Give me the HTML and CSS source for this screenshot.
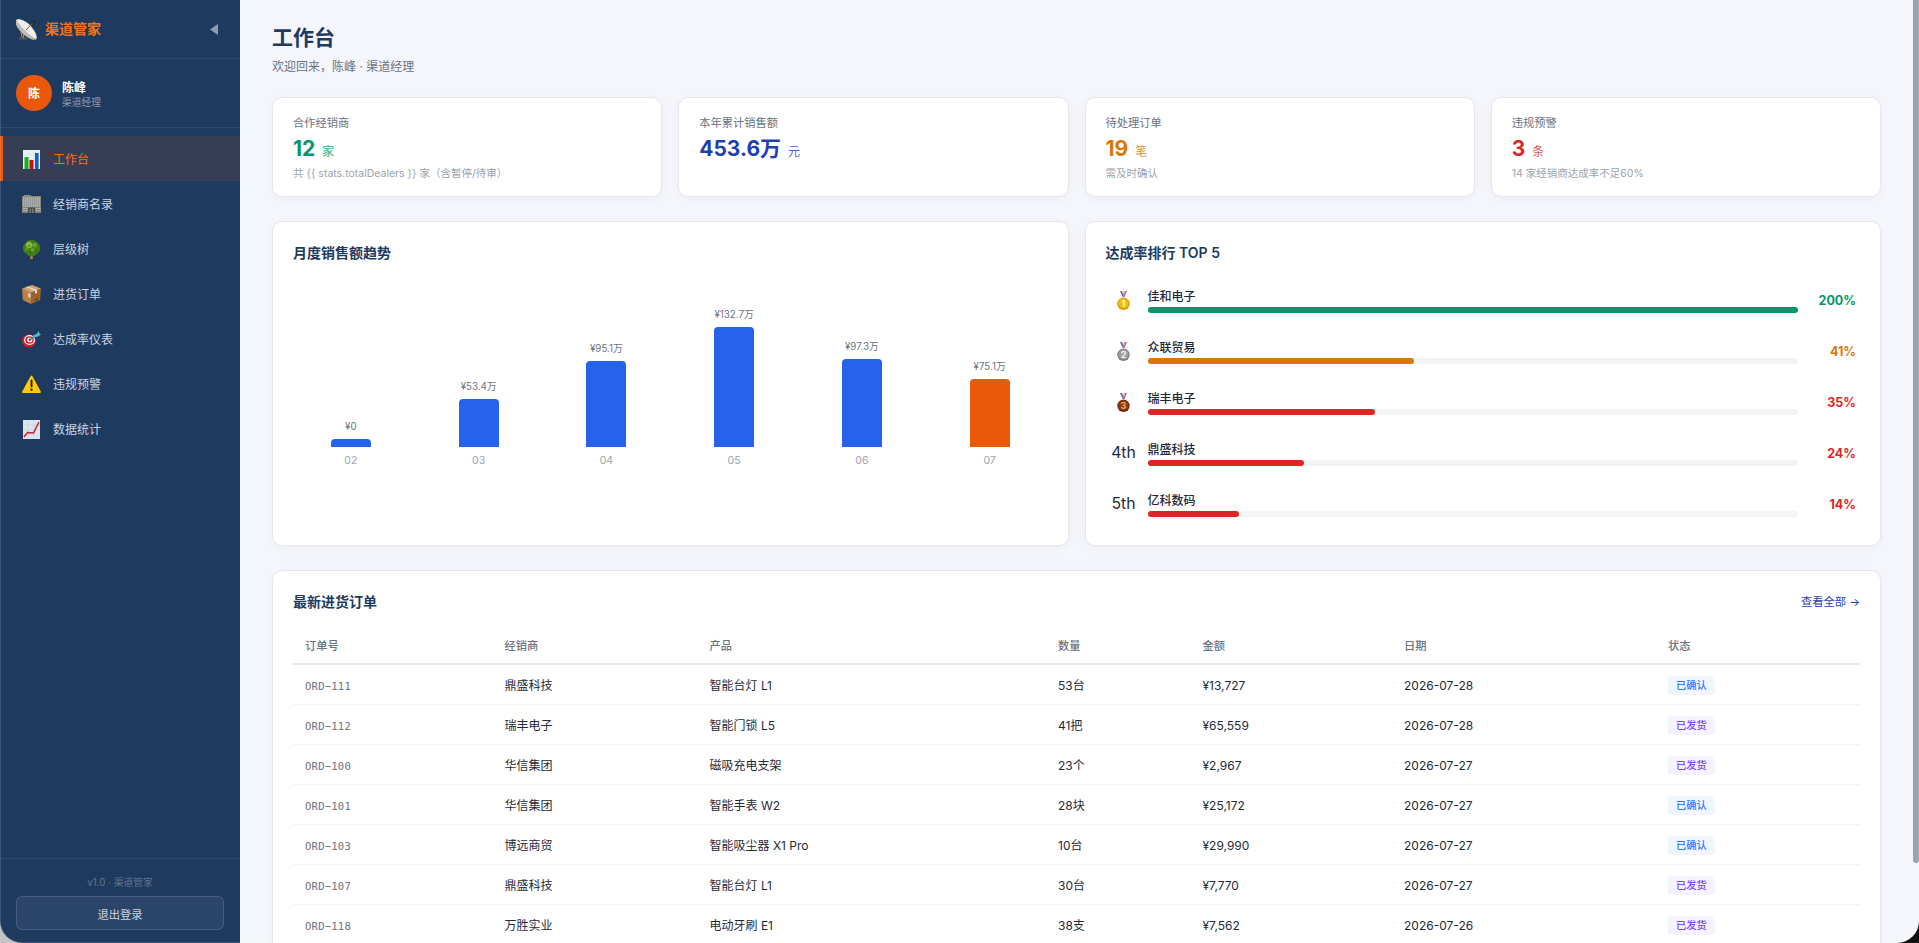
FILE: index.html
```html
<!DOCTYPE html>
<html lang="zh-CN">
<head>
    <meta charset="UTF-8">
    <meta name="viewport" content="width=device-width, initial-scale=1.0">
    <title>渠道管家</title>
    <link rel="stylesheet" href="styles.css">
</head>
<body>
    <div class="app">
        <aside class="sidebar">
            <div class="sidebar__header">
                <svg class="logo" viewBox="0 0 21 21">
                    <path d="M3 12l6-1 4 6-3 3H4z" fill="#30353b"/>
                    <ellipse cx="7" cy="19.300" rx="5" ry="1.600" fill="#4b5057"/>
                    <path d="M5 13l1 5M8 15l-1 4" stroke="#a9aaa8" stroke-width=".9"/>
                    <path d="M10 10l7-7M16 13l2-9" stroke="#2f3337" stroke-width="1.300"/>
                    <path d="M13.500 4l4-3 2.500 1-1 3-3 1.500z" fill="#2b2f33"/>
                    <path d="M0 .8C2-1 10 1 15 7s7.500 12 5 13.500S9 18 4 12-1 2.500 0 .8z" fill="#bcbdba"/>
                    <path d="M1 .8c3-1 9 1.200 13.500 6.700S21 18 19.500 19C15 18 3 7 1 .8z" fill="#efefed"/>
                    <path d="M10 11l6.500-7" stroke="#66696b" stroke-width="1"/>
                </svg>
                <span class="sidebar__title">渠道管家</span>
                <svg class="sidebar__toggle" viewBox="0 0 8 11"><path d="M8 0v11L0 5.500z"/></svg>
            </div>
            <div class="user">
                <div class="user__avatar">陈</div>
                <div class="user__info">
                    <div class="user__name">陈峰</div>
                    <div class="user__role">渠道经理</div>
                </div>
            </div>
            <nav class="nav">
                <a class="nav__item nav__item--active">
                    <svg class="nav__icon" viewBox="0 0 19 19">
                        <path d="M1 0h17v19H1z" fill="#e9f0f7"/>
                        <path d="M1 5h17M1 10h17M1 15h17M7 0v19M12 0v19" stroke="#c8d5e2" stroke-width=".5"/>
                        <path d="M2.500 7h4v12h-4z" fill="#12b512"/>
                        <path d="M7.500 10h4v9h-4z" fill="#c0141c"/>
                        <path d="M13 3h3.600v16H13z" fill="#1260c4"/>
                    </svg>
                    工作台
                </a>
                <a class="nav__item">
                    <svg class="nav__icon" viewBox="0 0 19 19">
                        <path d="M2 0h7v2H2z" fill="#8b8f8c"/>
                        <path d="M0 1h19v17H0z" fill="#86867c"/>
                        <path d="M1 3h17M1 5h17M1 7h17M1 9h17M1 11h17" stroke="#a9bdc0" stroke-width="1.300" stroke-dasharray="1.500 .5"/>
                        <path d="M1 13.500h5M1 15.500h5M13.500 13.500h5M13.500 15.500h5" stroke="#b5b0a4" stroke-width="1.200"/>
                        <path d="M6 12.500h7V18H6z" fill="#494741"/>
                        <path d="M8.200 13.500V18M10.800 13.500V18" stroke="#a7b1b0" stroke-width=".8"/>
                    </svg>
                    经销商名录
                </a>
                <a class="nav__item">
                    <svg class="nav__icon" viewBox="0 0 19 19">
                        <path d="M8.600 13h1.800l.4 6H8.200z" fill="#b38a35"/>
                        <path d="M9.500 0c3 0 5 1 6 3 2 1 3 3 2.500 5 .5 3-1 5-3.500 6-2 3-8 3-10 0C2 13 .5 11 1 8 .5 6 2 4 3.500 3c1-2 3-3 6-3z" fill="#3f7d17"/>
                        <circle cx="7" cy="5" r="3.200" fill="#86b93a"/>
                        <circle cx="12.500" cy="5.500" r="2.400" fill="#6fa52b"/>
                        <circle cx="5" cy="9.500" r="2" fill="#5f9823"/>
                        <circle cx="10.500" cy="10" r="2" fill="#689f2a"/>
                        <path d="M6 7l2-2M11 8l2-2M4 12l2-2M13 12l2-2M8 13l1-2" stroke="#28580c" stroke-width=".8"/>
                    </svg>
                    层级树
                </a>
                <a class="nav__item">
                    <svg class="nav__icon" viewBox="0 0 19 19">
                        <path d="M0 3.500L9 7v12L.8 15z" fill="#b98049"/>
                        <path d="M19 3.500L9 7v12l9.200-4z" fill="#99622f"/>
                        <path d="M0 3.500L10 0l9 3.500L9 7.500z" fill="#d3a375"/>
                        <path d="M4 2.100L6 1.400 15 5v3l-2 .8V6z" fill="#ead9c3"/>
                        <path d="M6 8l2.500 1v4L6 12z" fill="#e5cfb4"/>
                        <path d="M13 14l3-1.300v2L13 16z" fill="#6d421c"/>
                    </svg>
                    进货订单
                </a>
                <a class="nav__item">
                    <svg class="nav__icon" viewBox="0 0 19 19">
                        <ellipse cx="7" cy="11" rx="7" ry="6.500" fill="#cf1e29"/>
                        <ellipse cx="7.500" cy="10" rx="5.500" ry="5" fill="#f3efef"/>
                        <ellipse cx="7.500" cy="10" rx="4.200" ry="3.700" fill="#cf1e29"/>
                        <ellipse cx="7.700" cy="9.900" rx="2.700" ry="2.400" fill="#f3efef"/>
                        <circle cx="7.900" cy="9.800" r="1.200" fill="#cf1e29"/>
                        <path d="M8 9.800L15 4" stroke="#2b8e9c" stroke-width="1.500"/>
                        <path d="M11 5.500L15 4l1.500-3 1 2.500L19 4.500l-3 2-4 1z" fill="#52bfca"/>
                    </svg>
                    达成率仪表
                </a>
                <a class="nav__item">
                    <svg class="nav__icon" viewBox="0 0 19 19">
                        <path d="M9.500 1.500L18 17H1z" fill="#ffca0c" stroke="#ffca0c" stroke-width="1.800" stroke-linejoin="round"/>
                        <path d="M9.500 5.500v6" stroke="#322a12" stroke-width="2" stroke-linecap="round"/>
                        <circle cx="9.500" cy="14.800" r="1.200" fill="#322a12"/>
                    </svg>
                    违规预警
                </a>
                <a class="nav__item">
                    <svg class="nav__icon" viewBox="0 0 19 19">
                        <path d="M1 0h17v19H1z" fill="#dde6ee"/>
                        <path d="M1 5h17M1 10h17M1 15h17M6 0v19M12 0v19" stroke="#bccad6" stroke-width=".5"/>
                        <path d="M2 17l3.500-4.500 6 .5L17 2" fill="none" stroke="#c8202d" stroke-width="1.500"/>
                    </svg>
                    数据统计
                </a>
            </nav>
            <div class="sidebar__footer">
                <div class="version">v1.0 · 渠道管家</div>
                <button class="logout">退出登录</button>
            </div>
        </aside>

        <main class="main">
            <h1 class="page-title">工作台</h1>
            <p class="page-subtitle">欢迎回来，陈峰 · 渠道经理</p>

            <section class="stats">
                <div class="card stat stat--green">
                    <div class="stat__label">合作经销商</div>
                    <div class="stat__value">12 <span class="stat__unit">家</span></div>
                    <div class="stat__sub">共 {{ stats.totalDealers }} 家（含暂停/待审）</div>
                </div>
                <div class="card stat stat--blue">
                    <div class="stat__label">本年累计销售额</div>
                    <div class="stat__value">453.6万 <span class="stat__unit">元</span></div>
                </div>
                <div class="card stat stat--amber">
                    <div class="stat__label">待处理订单</div>
                    <div class="stat__value">19 <span class="stat__unit">笔</span></div>
                    <div class="stat__sub">需及时确认</div>
                </div>
                <div class="card stat stat--red">
                    <div class="stat__label">违规预警</div>
                    <div class="stat__value">3 <span class="stat__unit">条</span></div>
                    <div class="stat__sub">14 家经销商达成率不足60%</div>
                </div>
            </section>

            <section class="panels">
                <div class="card panel">
                    <h2 class="panel__title">月度销售额趋势</h2>
                    <div class="chart">
                        <div class="chart__col"><span class="chart__value">¥0</span><div class="chart__bar" style="height: 8px"></div><span class="chart__label">02</span></div>
                        <div class="chart__col"><span class="chart__value">¥53.4万</span><div class="chart__bar" style="height: 48px"></div><span class="chart__label">03</span></div>
                        <div class="chart__col"><span class="chart__value">¥95.1万</span><div class="chart__bar" style="height: 86px"></div><span class="chart__label">04</span></div>
                        <div class="chart__col"><span class="chart__value">¥132.7万</span><div class="chart__bar" style="height: 120px"></div><span class="chart__label">05</span></div>
                        <div class="chart__col"><span class="chart__value">¥97.3万</span><div class="chart__bar" style="height: 88px"></div><span class="chart__label">06</span></div>
                        <div class="chart__col"><span class="chart__value">¥75.1万</span><div class="chart__bar chart__bar--current" style="height: 68px"></div><span class="chart__label">07</span></div>
                    </div>
                </div>
                <div class="card panel">
                    <h2 class="panel__title">达成率排行 TOP 5</h2>
                    <div class="ranks">
                        <div class="rank rank--green">
                            <div class="rank__no">
                                <svg class="medal" viewBox="0 0 13 19">
                                    <path d="M3 0h3l1 6H5.800z" fill="#4a68c8"/><path d="M10 0H7L6 6h1.500z" fill="#e0565c"/><path d="M4.800 0h1l.9 4.500zM7.500 0h.9l-1.200 4.500z" fill="#eee"/>
                                    <circle cx="6.500" cy="12.800" r="6.200" fill="#dc9a05"/><circle cx="6.500" cy="12.500" r="4.900" fill="#f3bd12"/>
                                    <text x="6.500" y="15.900" fill="#fff8cc">1</text>
                                </svg>
                            </div>
                            <div class="rank__body"><div class="rank__name">佳和电子</div><div class="rank__track"><div class="rank__fill" style="width: 100%"></div></div></div>
                            <div class="rank__pct">200%</div>
                        </div>
                        <div class="rank rank--amber">
                            <div class="rank__no">
                                <svg class="medal" viewBox="0 0 13 19">
                                    <path d="M3 0h3l1 6H5.800z" fill="#4a68c8"/><path d="M10 0H7L6 6h1.500z" fill="#e0565c"/><path d="M4.800 0h1l.9 4.500zM7.500 0h.9l-1.200 4.500z" fill="#eee"/>
                                    <circle cx="6.500" cy="12.800" r="6.200" fill="#7d7d7d"/><circle cx="6.500" cy="12.500" r="4.900" fill="#a0a0a0"/>
                                    <text x="6.500" y="15.900" fill="#f1f1f1">2</text>
                                </svg>
                            </div>
                            <div class="rank__body"><div class="rank__name">众联贸易</div><div class="rank__track"><div class="rank__fill" style="width: 41%"></div></div></div>
                            <div class="rank__pct">41%</div>
                        </div>
                        <div class="rank rank--red">
                            <div class="rank__no">
                                <svg class="medal" viewBox="0 0 13 19">
                                    <path d="M3 0h3l1 6H5.800z" fill="#4a68c8"/><path d="M10 0H7L6 6h1.500z" fill="#e0565c"/><path d="M4.800 0h1l.9 4.500zM7.500 0h.9l-1.200 4.500z" fill="#eee"/>
                                    <circle cx="6.500" cy="12.800" r="6.200" fill="#71290a"/><circle cx="6.500" cy="12.500" r="4.900" fill="#8f3a10"/>
                                    <text x="6.500" y="15.900" fill="#f0a35c">3</text>
                                </svg>
                            </div>
                            <div class="rank__body"><div class="rank__name">瑞丰电子</div><div class="rank__track"><div class="rank__fill" style="width: 35%"></div></div></div>
                            <div class="rank__pct">35%</div>
                        </div>
                        <div class="rank rank--red">
                            <div class="rank__no">4th</div>
                            <div class="rank__body"><div class="rank__name">鼎盛科技</div><div class="rank__track"><div class="rank__fill" style="width: 24%"></div></div></div>
                            <div class="rank__pct">24%</div>
                        </div>
                        <div class="rank rank--red">
                            <div class="rank__no">5th</div>
                            <div class="rank__body"><div class="rank__name">亿科数码</div><div class="rank__track"><div class="rank__fill" style="width: 14%"></div></div></div>
                            <div class="rank__pct">14%</div>
                        </div>
                    </div>
                </div>
            </section>

            <section class="card panel">
                <div class="panel__head">
                    <h2 class="panel__title">最新进货订单</h2>
                    <a class="panel__link">查看全部 →</a>
                </div>
                <table class="orders">
                    <colgroup>
                        <col class="col-id"><col class="col-dealer"><col class="col-product"><col class="col-qty"><col class="col-amount"><col class="col-date"><col>
                    </colgroup>
                    <thead>
                        <tr><th>订单号</th><th>经销商</th><th>产品</th><th>数量</th><th>金额</th><th>日期</th><th>状态</th></tr>
                    </thead>
                    <tbody>
                        <tr><td class="orders__id">ORD−111</td><td>鼎盛科技</td><td>智能台灯 L1</td><td>53台</td><td>¥13,727</td><td>2026-07-28</td><td><span class="badge badge--confirmed">已确认</span></td></tr>
                        <tr><td class="orders__id">ORD−112</td><td>瑞丰电子</td><td>智能门锁 L5</td><td>41把</td><td>¥65,559</td><td>2026-07-28</td><td><span class="badge badge--shipped">已发货</span></td></tr>
                        <tr><td class="orders__id">ORD−100</td><td>华信集团</td><td>磁吸充电支架</td><td>23个</td><td>¥2,967</td><td>2026-07-27</td><td><span class="badge badge--shipped">已发货</span></td></tr>
                        <tr><td class="orders__id">ORD−101</td><td>华信集团</td><td>智能手表 W2</td><td>28块</td><td>¥25,172</td><td>2026-07-27</td><td><span class="badge badge--confirmed">已确认</span></td></tr>
                        <tr><td class="orders__id">ORD−103</td><td>博远商贸</td><td>智能吸尘器 X1 Pro</td><td>10台</td><td>¥29,990</td><td>2026-07-27</td><td><span class="badge badge--confirmed">已确认</span></td></tr>
                        <tr><td class="orders__id">ORD−107</td><td>鼎盛科技</td><td>智能台灯 L1</td><td>30台</td><td>¥7,770</td><td>2026-07-27</td><td><span class="badge badge--shipped">已发货</span></td></tr>
                        <tr><td class="orders__id">ORD−118</td><td>万胜实业</td><td>电动牙刷 E1</td><td>38支</td><td>¥7,562</td><td>2026-07-26</td><td><span class="badge badge--shipped">已发货</span></td></tr>
                    </tbody>
                </table>
            </section>
        </main>
        <div class="scrollbar"></div>
    </div>
</body>
</html>
```
FILE: styles.css
```css
* {
    margin: 0;
    padding: 0;
    box-sizing: border-box;
}

body {
    background: linear-gradient(90deg, #c4c4c4 50%, #111 50%);
    color: #1f2937;
    font-family: Inter, "Noto Sans CJK SC", sans-serif;
    font-size: 12px;
    line-height: 18px;
    overflow: hidden;
}

.app {
    position: relative;
    display: flex;
    height: 943px;
    background-color: #f5f6fb;
    border-radius: 0 0 22px 22px;
    overflow: hidden;
}

/* thin light edge of the window */
.app::after {
    content: "";
    position: absolute;
    inset: -2px 0 0 0;
    border: 1px solid rgba(255, 255, 255, 0.14);
    border-radius: 0 0 22px 22px;
    pointer-events: none;
}

.scrollbar {
    position: absolute;
    top: 0;
    right: 0;
    width: 6px;
    height: 863px;
    background-color: #9ca3af;
    border-radius: 0 0 3px 3px;
}

/* sidebar */
.sidebar {
    display: flex;
    flex-direction: column;
    flex: none;
    width: 240px;
    background-color: #1e3a5f;
    color: #cbd5e1;
}

.sidebar__header {
    display: flex;
    align-items: center;
    height: 59px;
    padding: 0 22px 0 16px;
    border-bottom: 1px solid rgba(255, 255, 255, 0.08);
}

.logo {
    width: 21px;
    height: 21px;
    margin-right: 8px;
}

.sidebar__title {
    flex: 1;
    color: #f97316;
    font-size: 14px;
    font-weight: 700;
}

.sidebar__toggle {
    width: 8px;
    height: 11px;
    fill: #8e9caf;
}

.user {
    display: flex;
    align-items: center;
    gap: 10px;
    height: 69px;
    padding: 0 16px;
    border-bottom: 1px solid rgba(255, 255, 255, 0.08);
}

.user__avatar {
    width: 36px;
    height: 36px;
    border-radius: 50%;
    background-color: #ea580c;
    color: #fff;
    font-weight: 700;
    line-height: 38px;
    text-align: center;
}

.user__info {
    padding-top: 4px;
}

.user__name {
    color: #fff;
    font-weight: 600;
    line-height: 16px;
}

.user__role {
    color: #8998ad;
    font-size: 9.75px;
    line-height: 14px;
}

.nav {
    flex: 1;
    padding-top: 8px;
}

.nav__item {
    display: flex;
    align-items: center;
    gap: 12px;
    height: 45px;
    padding: 2px 0 0 19px;
    border-left: 3px solid transparent;
}

.nav__item--active {
    background-color: rgba(234, 88, 12, 0.12);
    border-left-color: #ea580c;
    color: #f97316;
}

.nav__icon {
    width: 19px;
    height: 19px;
}

.sidebar__footer {
    padding: 15px 16px 13px;
    border-top: 1px solid rgba(255, 255, 255, 0.08);
    text-align: center;
}

.version {
    margin-bottom: 5px;
    color: #62758f;
    font-size: 9.75px;
    line-height: 17px;
}

.logout {
    display: block;
    width: 100%;
    height: 34px;
    padding-top: 2px;
    background-color: rgba(255, 255, 255, 0.06);
    border: 1px solid rgba(255, 255, 255, 0.13);
    border-radius: 6px;
    color: #cbd5e1;
    font-family: inherit;
    font-size: 11.25px;
}

/* main area */
.main {
    flex: 1;
    padding: 24px 38px 24px 32px;
}

.page-title {
    color: #1e3a5f;
    font-size: 21px;
    font-weight: 700;
    line-height: 28px;
}

.page-subtitle {
    margin: 6px 0 21px;
    color: #6b7280;
    line-height: 18px;
}

.card {
    background-color: #fff;
    border: 1px solid #e5e7eb;
    border-radius: 10px;
    box-shadow: 0 2px 8px rgba(0, 0, 0, 0.04);
}

.stats {
    display: grid;
    grid-template-columns: repeat(4, 1fr);
    gap: 16px;
    margin-bottom: 24px;
}

.stat {
    height: 100px;
    padding: 16px 20px;
}

.stat__label {
    color: #6b7280;
    font-size: 11.25px;
}

.stat__value {
    margin: 1px 0 -3px;
    font-size: 21px;
    font-weight: 700;
    line-height: 32px;
}

.stat__unit {
    margin-left: 2px;
    font-size: 12px;
    font-weight: 400;
    opacity: 0.8;
}

.stat__sub {
    color: #9ca3af;
    font-size: 10.5px;
}

.stat--green .stat__value {
    color: #059669;
}

.stat--blue .stat__value {
    color: #1e40af;
}

.stat--amber .stat__value {
    color: #d97706;
}

.stat--red .stat__value {
    color: #dc2626;
}

.panels {
    display: grid;
    grid-template-columns: 1fr 1fr;
    gap: 16px;
    margin-bottom: 24px;
}

.panels .panel {
    height: 325px;
}

.panel {
    padding: 20px;
}

.panel__head {
    display: flex;
    align-items: center;
    justify-content: space-between;
}

.panel__title {
    color: #1e3a5f;
    font-size: 14px;
    font-weight: 600;
    line-height: 22px;
}

.panel__link {
    color: #1e40af;
    font-size: 11.25px;
}

/* monthly chart */
.chart {
    display: flex;
    align-items: flex-end;
    gap: 12px;
    height: 180px;
    margin-top: 25px;
}

.chart__col {
    display: flex;
    flex: 1;
    flex-direction: column;
    align-items: center;
}

.chart__value {
    margin-bottom: 4px;
    color: #6b7280;
    font-size: 9.75px;
    line-height: 16px;
}

.chart__bar {
    width: 40px;
    background-color: #2563eb;
    border-radius: 4px 4px 0 0;
}

.chart__bar--current {
    background-color: #ea580c;
}

.chart__label {
    margin-top: 6px;
    color: #9ca3af;
    font-size: 10.5px;
    line-height: 16px;
}

/* ranking */
.ranks {
    display: flex;
    flex-direction: column;
    gap: 12px;
    margin-top: 16px;
}

.rank {
    display: flex;
    align-items: center;
    gap: 10px;
    height: 39px;
    padding: 0 4px;
}

.rank__no {
    display: flex;
    justify-content: center;
    width: 28px;
    padding-top: 1px;
    font-size: 15.75px;
}

.medal {
    width: 13px;
    height: 19px;
}

.medal text {
    font-size: 9px;
    font-weight: 700;
    text-anchor: middle;
}

.rank__body {
    flex: 1;
    padding-top: 2px;
}

.rank__name {
    margin-bottom: 1px;
    font-weight: 500;
}

.rank__track {
    height: 6px;
    background-color: #f3f4f6;
    border-radius: 3px;
}

.rank__fill {
    height: 6px;
    border-radius: 3px;
    background-color: currentColor;
}

.rank__pct {
    width: 48px;
    padding-top: 2px;
    font-size: 12.5px;
    font-weight: 700;
    text-align: right;
}

.rank--green .rank__fill,
.rank--green .rank__pct {
    color: #059669;
}

.rank--amber .rank__fill,
.rank--amber .rank__pct {
    color: #d97706;
}

.rank--red .rank__fill,
.rank--red .rank__pct {
    color: #dc2626;
}

/* orders table */
.orders {
    width: 100%;
    margin-top: 13px;
    border-collapse: separate;
    border-spacing: 0;
    table-layout: fixed;
}

.col-id {
    width: 199.5px;
}

.col-dealer {
    width: 205px;
}

.col-product {
    width: 348.5px;
}

.col-qty {
    width: 144.5px;
}

.col-amount {
    width: 201.5px;
}

.col-date {
    width: 264px;
}

.orders th {
    height: 39px;
    padding: 3px 12px 0;
    border-bottom: 2px solid #e5e7eb;
    color: #6b7280;
    font-size: 11.25px;
    font-weight: 500;
    text-align: left;
}

.orders td {
    height: 40px;
    padding: 2px 12px 0;
    border-bottom: 1px solid #f3f4f6;
}

.orders .orders__id {
    color: #6b7280;
    font-family: "DejaVu Sans Mono", monospace;
    font-size: 10.5px;
    letter-spacing: 0.25px;
}

.badge {
    display: inline-block;
    padding: 0 8px;
    border-radius: 4px;
    font-size: 10.25px;
    font-weight: 500;
    line-height: 19px;
    vertical-align: middle;
}

.badge--confirmed {
    background-color: #eff6ff;
    color: #2f7bf0;
}

.badge--shipped {
    background-color: #f5f3ff;
    color: #7c4df0;
}
```
